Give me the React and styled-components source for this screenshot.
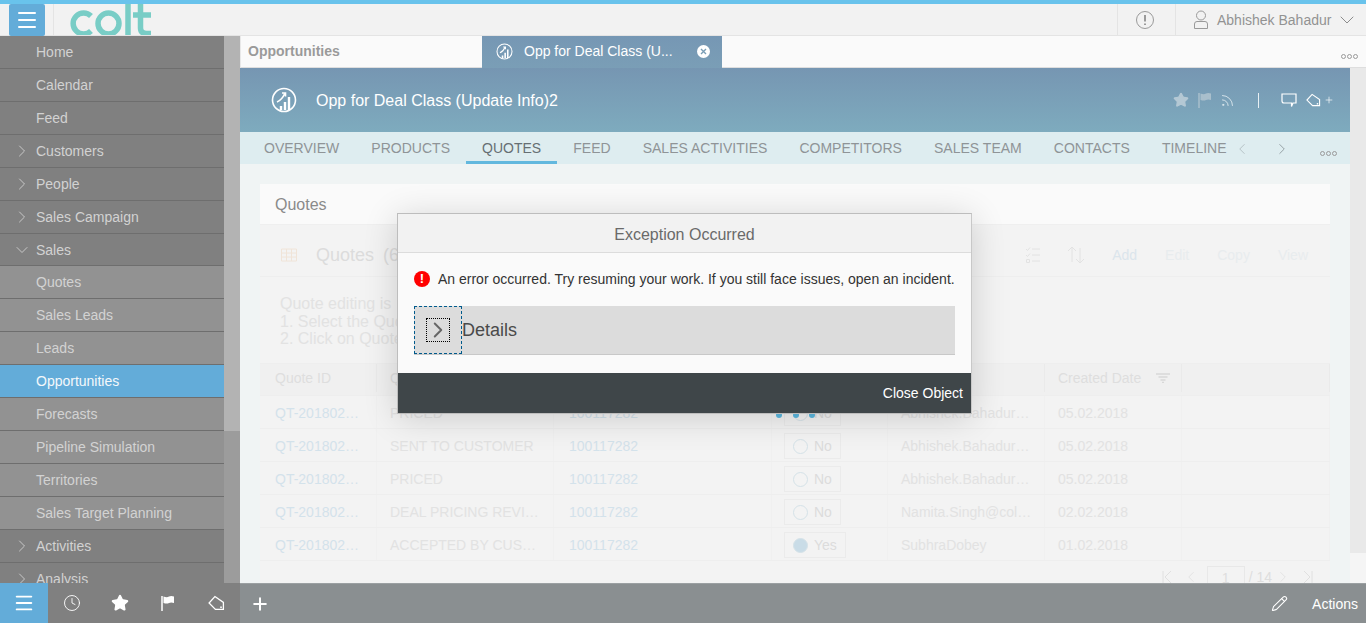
import React from "react";
import styled, { createGlobalStyle } from "styled-components";
import { ChevronRight, ChevronLeft, ChevronDown, Star, Rss, Pencil, Plus, Clock, Menu } from "lucide-react";

const GlobalStyle = createGlobalStyle`
  html, body { margin: 0; padding: 0; height: 100%; overflow: hidden; }
  body { font-family: "Liberation Sans", Arial, sans-serif; font-size: 14px; }
  * { box-sizing: border-box; }
`;

const Page = styled.div`
  position: relative;
  width: 1366px;
  height: 623px;
  display: flex;
  flex-direction: column;
  overflow: hidden;
  border-top: 4px solid #69c3ec;
  background: #f5f5f5;
`;

/* Top bar */
const TopBar = styled.header`
  height: 32px;
  flex: none;
  display: flex;
  align-items: stretch;
  background: #f2f2f2;
  border-bottom: 1px solid #e4e4e4;
`;
const MenuToggle = styled.div`
  width: 36px;
  height: 32px;
  margin-left: 9px;
  background: #63acd9;
  border-radius: 2px;
  color: #fff;
  display: flex;
  align-items: center;
  justify-content: center;
`;
const LogoWrap = styled.div`
  margin-left: 8px;
  padding-left: 16px;
  border-left: 1px solid #e4e4e4;
  flex: 1;
  overflow: hidden;
`;
const AlertCell = styled.div`
  width: 58px;
  padding-right: 4px;
  border-left: 1px solid #e4e4e4;
  display: flex;
  align-items: center;
  justify-content: center;
`;
const UserCell = styled.div`
  width: 191px;
  border-left: 1px solid #e4e4e4;
  display: flex;
  align-items: center;
  padding-left: 17px;
  gap: 8px;
  color: #929292;
  white-space: nowrap;
`;
const UserCaret = styled.span`
  display: flex;
  margin-left: -4px;
`;

/* Page body */
const Body = styled.div`
  flex: 1;
  min-height: 0;
  display: flex;
`;
const Side = styled.aside`
  width: 240px;
  flex: none;
  display: flex;
  overflow: hidden;
`;
const NavList = styled.nav`
  width: 224px;
  flex: none;
`;
const NavRow = styled.div`
  height: ${(p) => (p.$open ? "32px" : "33px")};
  display: flex;
  align-items: center;
  padding-left: ${(p) => (p.$top ? "12px" : "36px")};
  gap: 4px;
  font-size: 14px;
  color: ${(p) => (p.$active ? "#f4f8fb" : "#d2d2d2")};
  background: ${(p) => (p.$active ? "#63acd9" : p.$sub ? "#929292" : "#808080")};
  border-bottom: 1px solid #6e6e6e;
  svg { color: #c8c8c8; flex: none; }
`;
const ScrollTrack = styled.div`
  width: 16px;
  flex: none;
  background: #9c9c9c;
`;
const ScrollThumb = styled.div`
  height: 395px;
  background: #b3b3b3;
`;

const Main = styled.main`
  flex: 1;
  min-width: 0;
  display: flex;
  flex-direction: column;
`;
const TabStrip = styled.div`
  height: 32px;
  flex: none;
  display: flex;
  background: #fafafa;
  border-bottom: 1px solid #dedede;
  border-left: 1px solid #e8e8e8;
`;
const PlainTab = styled.div`
  width: 241px;
  padding: 7px 0 0 7px;
  font-weight: bold;
  color: #9a9a9a;
`;
const ActiveTab = styled.div`
  width: 240px;
  height: 32px;
  display: flex;
  align-items: center;
  color: #fff;
  background: linear-gradient(#7697b4, #7a9eb6);
  padding: 0 0 2px 14px;
`;
const ActiveTabLabel = styled.span`
  margin-left: 11px;
  width: 173px;
`;
const CloseDot = styled.span`
  width: 13px;
  height: 13px;
  border-radius: 50%;
  background: #fff;
  display: flex;
  align-items: center;
  justify-content: center;
`;
const StripMore = styled.div`
  margin-left: auto;
  display: flex;
  padding: 18px 8px 0 0;
`;
const More = styled.span`
  display: flex;
  gap: 1px;
  i {
    width: 5px;
    height: 5px;
    border: 1px solid #9a9a9a;
    border-radius: 50%;
    display: block;
  }
`;

const Work = styled.div`
  flex: 1;
  min-height: 0;
  display: flex;
`;
const Center = styled.div`
  width: 1110px;
  flex: none;
  display: flex;
  flex-direction: column;
  background: #f0f4f4;
`;
const RightTrack = styled.div`
  flex: 1;
  display: flex;
  flex-direction: column;
`;
const RightThumb = styled.div`
  height: 485px;
  background: #e9e9e9;
`;

const Banner = styled.div`
  height: 64px;
  flex: none;
  display: flex;
  align-items: center;
  padding: 0 16px 0 31px;
  background: linear-gradient(#7696b2, #7eabbe);
  color: #fff;
`;
const BannerTitle = styled.div`
  margin: 2px 0 0 19px;
  font-size: 16px;
  flex: 1;
`;
const BannerIcons = styled.div`
  display: flex;
  align-items: center;
`;
const IconGap = styled.span`
  width: ${(p) => p.$w}px;
`;
const Bar = styled.span`
  width: 1px;
  height: 15px;
  background: #e8f0f4;
  margin: 0 22px 0 23px;
`;

const TabsBar = styled.div`
  height: 32px;
  flex: none;
  display: flex;
  background: #deedf0;
  padding-left: 8px;
`;
const TabItem = styled.div`
  height: 32px;
  padding: 8px 16px 0;
  font-size: 14px;
  letter-spacing: 0.015px;
  white-space: nowrap;
  color: ${(p) => (p.$active ? "#666f73" : "#8f9497")};
  border-bottom: 3px solid ${(p) => (p.$active ? "#63b8de" : "transparent")};
`;
const TabsTail = styled.div`
  display: flex;
  align-items: center;
  color: #a9b4b8;
  margin-left: -10px;
  padding-top: 1px;
  svg { flex: none; }
`;
const TailMore = styled.div`
  margin: 9px 0 0 29px;
`;

const Canvas = styled.div`
  flex: 1;
  min-height: 0;
  padding: 20px 20px 0;
  overflow: hidden;
`;
const Card = styled.section`
  background: #f3f3f3;
  height: 400px;
`;
const CardHead = styled.div`
  height: 41px;
  background: #fafafa;
  border-bottom: 1px solid #efefef;
  padding: 12px 0 0 15px;
  font-size: 16px;
  color: #8a8a8a;
`;
const ToolRow = styled.div`
  height: 52px;
  display: flex;
  align-items: center;
  padding: 9px 0 0 20px;
  border-bottom: 1px solid #eeeeee;
  color: #dcdcdc;
`;
const ListTitle = styled.div`
  margin-left: 18px;
  font-size: 18px;
  color: #dcdcdc;
  word-spacing: 4px;
  flex: 1;
`;
const ToolIcons = styled.div`
  display: flex;
  align-items: center;
  gap: 26px;
  margin-right: 27px;
`;
const ToolLink = styled.span`
  margin-right: ${(p) => p.$gap}px;
  color: ${(p) => (p.$on ? "#dbe5ec" : "#e8ecee")};
  font-size: 14px;
`;
const Hint = styled.div`
  height: 86px;
  padding: 18px 0 0 20px;
  font-size: 16px;
  line-height: 17.5px;
  color: #e2e2e2;
`;
const TableHead = styled.div`
  display: grid;
  grid-template-columns: 117px 177px 218px 116px 157px 137px 148px;
  height: 33px;
  padding-bottom: 3px;
  background: #f0f0f0;
  border-top: 1px solid #eeeeee;
  border-bottom: 1px solid #eeeeee;
`;
const HeadCell = styled.div`
  display: flex;
  align-items: center;
  gap: 15px;
  padding-left: ${(p) => p.$pad || 13}px;
  color: #dedede;
  border-right: 1px solid #eaeaea;
  white-space: nowrap;
`;
const Row = styled.div`
  display: grid;
  grid-template-columns: 117px 177px 218px 116px 157px 137px 148px;
  height: 33px;
  border-bottom: 1px solid #eeeeee;
`;
const Cell = styled.div`
  display: flex;
  align-items: center;
  padding-top: 2px;
  padding-left: ${(p) => p.$pad || 12}px;
  color: ${(p) => (p.$link ? "#d3e2eb" : "#e2e2e2")};
  border-right: 1px solid #f0f0f0;
  white-space: nowrap;
  overflow: hidden;
`;
const RadioBox = styled.div`
  height: 26px;
  display: flex;
  align-items: center;
  gap: 6px;
  padding: 0 8px;
  border: 1px solid #ebebeb;
  color: #dcdcdc;
`;
const RadioDot = styled.span`
  width: 15px;
  height: 15px;
  border-radius: 50%;
  border: 1px solid #d5e2e8;
  background: ${(p) => (p.$on ? "#c9dce7" : "transparent")};
`;
const Pager = styled.div`
  display: flex;
  justify-content: flex-end;
  align-items: center;
  height: 24px;
  margin-top: 4px;
  padding-right: 17px;
  color: #dedede;
`;
const PagerSlot = styled.span`
  display: flex;
  margin-left: ${(p) => p.$ml}px;
`;
const PagerInput = styled.div`
  width: 38px;
  height: 22px;
  margin-left: 7px;
  border: 1px solid #e8e8e8;
  text-align: center;
  line-height: 22px;
`;

/* Bottom bar */
const Footer = styled.footer`
  height: 40px;
  flex: none;
  position: relative;
  z-index: 3;
  display: flex;
  align-items: center;
  background: #8a8f91;
  border-top: 1px solid #9ba0a2;
  color: #fff;
`;
const FooterLeft = styled.div`
  width: 240px;
  height: 40px;
  margin-top: -1px;
  display: flex;
  background: #808080;
`;
const FooterBtn = styled.div`
  width: 48px;
  height: 40px;
  display: flex;
  align-items: center;
  justify-content: center;
  background: ${(p) => (p.$active ? "#63acd9" : "transparent")};
`;
const FooterPlus = styled.div`
  display: flex;
  margin-left: 10px;
`;
const FooterRight = styled.div`
  margin-left: auto;
  padding-right: 8px;
  display: flex;
  align-items: center;
  gap: 24px;
`;

/* Dialog */
const Dialog = styled.div`
  position: absolute;
  left: 397px;
  top: 209px;
  width: 575px;
  height: 201px;
  z-index: 2;
  display: flex;
  flex-direction: column;
  background: #fafafa;
  border: 1px solid #bdbdbd;
  border-right-color: #c8c8c8;
  box-shadow: 0 4px 32px rgba(0, 0, 0, 0.16);
`;
const DialogTitle = styled.div`
  height: 39px;
  flex: none;
  background: #f2f2f2;
  border-bottom: 1px solid #dcdcdc;
  text-align: center;
  font-size: 16px;
  line-height: 41px;
  color: #6a6a6a;
`;
const DialogBody = styled.div`
  flex: 1;
  padding: 17px 16px 0 16px;
`;
const Message = styled.div`
  display: flex;
  align-items: center;
  gap: 8px;
  height: 18px;
  color: #333;
  white-space: nowrap;
`;
const ErrorDot = styled.span`
  width: 16px;
  height: 16px;
  border-radius: 50%;
  background: #f00;
  color: #fff;
  font-weight: bold;
  font-size: 13px;
  line-height: 16px;
  text-align: center;
  flex: none;
`;
const Details = styled.div`
  display: flex;
  align-items: center;
  height: 49px;
  margin-top: 18px;
  background: #dcdcdc;
  border-bottom: 1px solid #c8c8c8;
  font-size: 18px;
  color: #4a4a4a;
`;
const Expander = styled.div`
  width: 48px;
  height: 48px;
  display: flex;
  align-items: center;
  justify-content: center;
  border: 1px dashed #005a8c;
`;
const ExpanderInner = styled.div`
  width: 24px;
  height: 24px;
  display: flex;
  align-items: center;
  justify-content: center;
  border: 1px dotted #000;
  color: #666;
  svg { flex: none; }
`;
const DialogFooter = styled.div`
  height: 40px;
  flex: none;
  background: #3f4649;
  color: #fff;
  text-align: right;
  padding-right: 8px;
  line-height: 40px;
`;
const BusyDots = styled.div`
  position: absolute;
  left: 776px;
  top: 408px;
  z-index: 1;
  display: flex;
  gap: 10.5px;
  i {
    width: 6px;
    height: 6px;
    border-radius: 50%;
    background: #5cb8e0;
    display: block;
  }
`;

/* Drawn icons */
const ColtLogo = () => (
  <svg width="90" height="32" viewBox="0 0 90 32" fill="none" stroke="#79cdc6" strokeWidth="5.5">
    <path d="M21 12 A10.5 10.5 0 1 0 21 27" />
    <circle cx="38.500" cy="19.500" r="10.500" />
    <path d="M58 0 V32" />
    <path d="M70.500 0 V24 Q70.500 29.500 76.500 29.500 H81 M63 11 H81" />
  </svg>
);
const AlertIcon = () => (
  <svg width="20" height="20" viewBox="0 0 20 20" fill="none" stroke="#9a9a9a">
    <circle cx="10" cy="10" r="8.5" />
    <path d="M10 5 V11.5 M10 13.5 V15" strokeWidth="2" />
  </svg>
);
const UserIcon = () => (
  <svg width="16" height="20" viewBox="0 0 16 20" fill="none" stroke="#9a9a9a">
    <circle cx="8" cy="5.5" r="4.5" />
    <path d="M1.5 18.5 V14 Q1.5 11.5 4 11.5 H12 Q14.500 11.5 14.500 14 V18.5 Z" />
  </svg>
);
const OppIcon = ({ size = 26, color = "#fff" }) => (
  <svg width={size} height={size} viewBox="0 0 26 26" fill="none" stroke={color} strokeWidth="1.6">
    <circle cx="13" cy="13" r="11.500" />
    <path d="M6 15 Q11 13 14 6 M11 6 H14.500 V9.500" />
    <path d="M10 23 V19 M14 23 V15 M18 23 V10" strokeWidth="2.4" />
  </svg>
);
const FlagIcon = ({ color = "#fff" }) => (
  <svg width="14" height="16" viewBox="0 0 14 16">
    <path d="M1 1 V16" stroke={color} strokeWidth="1.500" />
    <path d="M2.500 1.500 Q6 3 8 1.500 Q10 0.500 13 1.500 V8 Q10 7 8 8 Q6 9 2.500 8 Z" fill={color} />
  </svg>
);
const TagIcon = ({ size = 16 }) => (
  <svg width={size} height={size} viewBox="0 0 16 16" fill="none" stroke="#fff" strokeWidth="1.200">
    <path d="M6.500 1.500 L14.500 7 V13.500 H7 L1 7.500 Z" />
    <path d="M11.500 11.500 H13" strokeWidth="1.500" />
  </svg>
);
const BubbleIcon = () => (
  <svg width="16" height="15" viewBox="0 0 16 15" fill="none" stroke="#fff" strokeWidth="1.200">
    <path d="M1 1 H15 V10 H12 L10.500 13.500 V10 H3 Q1 10 1 8 Z" />
  </svg>
);
const GridIcon = () => (
  <svg width="18" height="18" viewBox="0 0 18 18" fill="none" stroke="#f0e4d8">
    <path d="M1.500 3 H16.500 V15 H1.500 Z M1.500 7 H16.500 M1.500 11 H16.500 M6.500 3 V15 M11.500 3 V15" />
  </svg>
);
const ChecklistIcon = () => (
  <svg width="16" height="18" viewBox="0 0 16 18" fill="none" stroke="#e2e2e2">
    <path d="M7 3 H15 M7 9 H15 M7 15 H15 M1 3 L2.500 4.500 L5 1.500 M1 9 L2.500 10.500 L5 7.500 M1.500 13.500 H4.500 V16.500 H1.500 Z" />
  </svg>
);
const SortIcon = () => (
  <svg width="18" height="18" viewBox="0 0 18 18" fill="none" stroke="#e2e2e2">
    <path d="M5 16 V1 M1 5 L5 1 L9 5 M13 2 V17 M9 13 L13 17 L17 13" />
  </svg>
);
const FilterIcon = () => (
  <svg width="14" height="10" viewBox="0 0 14 10" fill="none" stroke="#d8d8d8" strokeWidth="1.300">
    <path d="M0 1 H14 M2.500 4 H11.500 M4.500 7 H9.500 M6 9.500 H8" />
  </svg>
);
const EdgeLeft = () => (
  <svg width="10" height="12" viewBox="0 0 10 12" fill="none" stroke="#e0e0e0">
    <path d="M1 0 V12 M9 0 L3 6 L9 12" />
  </svg>
);
const EdgeRight = () => (
  <svg width="10" height="12" viewBox="0 0 10 12" fill="none" stroke="#e0e0e0">
    <path d="M9 0 V12 M1 0 L7 6 L1 12" />
  </svg>
);

const NAV = [
  { label: "Home" },
  { label: "Calendar" },
  { label: "Feed" },
  { label: "Customers", top: true },
  { label: "People", top: true },
  { label: "Sales Campaign", top: true },
  { label: "Sales", top: true, open: true },
  { label: "Quotes", sub: true },
  { label: "Sales Leads", sub: true },
  { label: "Leads", sub: true },
  { label: "Opportunities", sub: true, active: true },
  { label: "Forecasts", sub: true },
  { label: "Pipeline Simulation", sub: true },
  { label: "Territories", sub: true },
  { label: "Sales Target Planning", sub: true },
  { label: "Activities", top: true },
  { label: "Analysis", top: true },
];

const TABS = ["OVERVIEW", "PRODUCTS", "QUOTES", "FEED", "SALES ACTIVITIES", "COMPETITORS", "SALES TEAM", "CONTACTS", "TIMELINE"];

const ROWS = [
  ["PRICED", "No", "Abhishek.Bahadur…", "05.02.2018"],
  ["SENT TO CUSTOMER", "No", "Abhishek.Bahadur…", "05.02.2018"],
  ["PRICED", "No", "Abhishek.Bahadur…", "05.02.2018"],
  ["DEAL PRICING REVI…", "No", "Namita.Singh@col…", "02.02.2018"],
  ["ACCEPTED BY CUS…", "Yes", "SubhraDobey", "01.02.2018"],
];

export default function App() {
  return (
    <Page>
      <GlobalStyle />
      <TopBar>
        <MenuToggle><Menu size={24} strokeWidth={2} /></MenuToggle>
        <LogoWrap><ColtLogo /></LogoWrap>
        <AlertCell><AlertIcon /></AlertCell>
        <UserCell>
          <UserIcon />
          Abhishek Bahadur
          <UserCaret><ChevronDown size={24} strokeWidth={1} color="#8c8c8c" /></UserCaret>
        </UserCell>
      </TopBar>

      <Body>
        <Side>
          <NavList>
            {NAV.map((item) => (
              <NavRow key={item.label} $top={item.top} $sub={item.sub} $active={item.active} $open={item.open}>
                {item.top && (item.open
                  ? <ChevronDown size={20} strokeWidth={1.2} />
                  : <ChevronRight size={20} strokeWidth={1.2} />)}
                {item.label}
              </NavRow>
            ))}
          </NavList>
          <ScrollTrack><ScrollThumb /></ScrollTrack>
        </Side>

        <Main>
          <TabStrip>
            <PlainTab>Opportunities</PlainTab>
            <ActiveTab>
              <OppIcon size={17} />
              <ActiveTabLabel>Opp for Deal Class (U...</ActiveTabLabel>
              <CloseDot>
                <svg width="7" height="7" viewBox="0 0 7 7" stroke="#7a9eb6" strokeWidth="1.400"><path d="M1 1 L6 6 M6 1 L1 6" /></svg>
              </CloseDot>
            </ActiveTab>
            <StripMore><More><i /><i /><i /></More></StripMore>
          </TabStrip>

          <Work>
            <Center>
              <Banner>
                <OppIcon />
                <BannerTitle>Opp for Deal Class (Update Info)2</BannerTitle>
                <BannerIcons>
                  <Star size={16} fill="#b4c8d4" color="#b4c8d4" />
                  <IconGap $w={9} />
                  <FlagIcon color="#a9bfcc" />
                  <IconGap $w={8} />
                  <Rss size={15} strokeWidth={1.3} color="#e8f0f4" />
                  <Bar />
                  <BubbleIcon />
                  <IconGap $w={9} />
                  <TagIcon size={15} />
                  <IconGap $w={3} />
                  <Plus size={10} strokeWidth={1.6} />
                </BannerIcons>
              </Banner>

              <TabsBar>
                {TABS.map((t) => <TabItem key={t} $active={t === "QUOTES"}>{t}</TabItem>)}
                <TabsTail>
                  <ChevronLeft size={18} strokeWidth={1} />
                  <IconGap $w={22} />
                  <ChevronRight size={18} strokeWidth={1} color="#7f8a8e" />
                  <TailMore><More><i /><i /><i /></More></TailMore>
                </TabsTail>
              </TabsBar>

              <Canvas>
                <Card>
                  <CardHead>Quotes</CardHead>
                  <ToolRow>
                    <GridIcon />
                    <ListTitle>Quotes (6)</ListTitle>
                    <ToolIcons>
                      <ChecklistIcon />
                      <SortIcon />
                    </ToolIcons>
                    <ToolLink $on $gap={28}>Add</ToolLink>
                    <ToolLink $gap={28}>Edit</ToolLink>
                    <ToolLink $gap={28}>Copy</ToolLink>
                    <ToolLink $gap={22}>View</ToolLink>
                  </ToolRow>
                  <Hint>
                    Quote editing is<br />
                    1. Select the Quote<br />
                    2. Click on Quote
                  </Hint>
                  <TableHead>
                    <HeadCell $pad={15}>Quote ID</HeadCell>
                    <HeadCell>Quote</HeadCell>
                    <HeadCell />
                    <HeadCell />
                    <HeadCell />
                    <HeadCell>Created Date<FilterIcon /></HeadCell>
                    <HeadCell />
                  </TableHead>
                  {ROWS.map(([status, flag, owner, date], i) => (
                    <Row key={i}>
                      <Cell $link $pad={15}>QT-201802…</Cell>
                      <Cell $pad={13}>{status}</Cell>
                      <Cell $link $pad={15}>100117282</Cell>
                      <Cell>
                        <RadioBox>
                          <RadioDot $on={flag === "Yes"} />
                          {flag}
                        </RadioBox>
                      </Cell>
                      <Cell $pad={13}>{owner}</Cell>
                      <Cell $pad={13}>{date}</Cell>
                      <Cell />
                    </Row>
                  ))}
                  <Pager>
                    <PagerSlot $ml={0}><EdgeLeft /></PagerSlot>
                    <PagerSlot $ml={10}><ChevronLeft size={18} strokeWidth={1} /></PagerSlot>
                    <PagerInput>1</PagerInput>
                    <PagerSlot $ml={4}>/ 14</PagerSlot>
                    <PagerSlot $ml={2}><ChevronRight size={18} strokeWidth={1} /></PagerSlot>
                    <PagerSlot $ml={11}><EdgeRight /></PagerSlot>
                  </Pager>
                </Card>
              </Canvas>
            </Center>
            <RightTrack><RightThumb /></RightTrack>
          </Work>
        </Main>
      </Body>

      <Footer>
        <FooterLeft>
          <FooterBtn $active><Menu size={22} strokeWidth={2} /></FooterBtn>
          <FooterBtn><Clock size={18} strokeWidth={1.2} /></FooterBtn>
          <FooterBtn><Star size={18} fill="#fff" /></FooterBtn>
          <FooterBtn><FlagIcon /></FooterBtn>
          <FooterBtn><TagIcon size={17} /></FooterBtn>
        </FooterLeft>
        <FooterPlus><Plus size={20} strokeWidth={2.4} /></FooterPlus>
        <FooterRight>
          <Pencil size={17} strokeWidth={1.5} />
          <span>Actions</span>
        </FooterRight>
      </Footer>

      <BusyDots><i /><i /><i /></BusyDots>
      <Dialog>
        <DialogTitle>Exception Occurred</DialogTitle>
        <DialogBody>
          <Message>
            <ErrorDot>!</ErrorDot>
            An error occurred. Try resuming your work. If you still face issues, open an incident.
          </Message>
          <Details>
            <Expander>
              <ExpanderInner><ChevronRight size={26} strokeWidth={1.8} /></ExpanderInner>
            </Expander>
            Details
          </Details>
        </DialogBody>
        <DialogFooter>Close Object</DialogFooter>
      </Dialog>
    </Page>
  );
}
